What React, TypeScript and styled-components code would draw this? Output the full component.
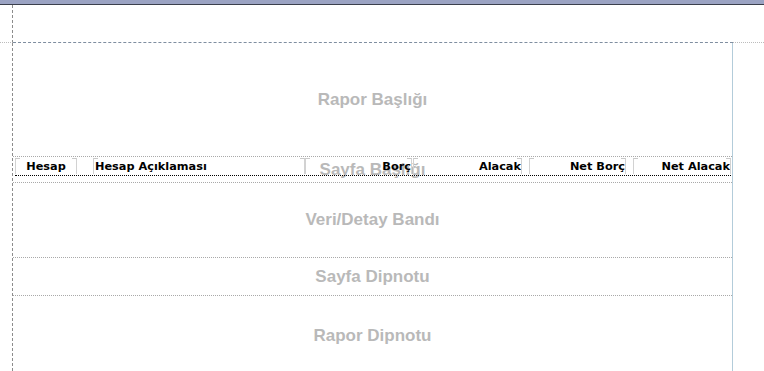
import React from 'react'
import styled, { createGlobalStyle } from 'styled-components'

const GlobalStyle = createGlobalStyle`
  html, body {
    margin: 0;
    padding: 0;
    background: #fff;
  }
  body {
    font-family: "DejaVu Sans", Verdana, sans-serif;
  }
`

const Screen = styled.div`
  width: 764px;
  height: 371px;
  overflow: hidden;
  display: flex;
  flex-direction: column;
  background: #fff;
`

const TitleBar = styled.div`
  flex: none;
  height: 4px;
  background: #9ba3c3;
  border-bottom: 1px solid #3b3f4c;
`

const Row = styled.div<{ $h?: number }>`
  display: flex;
  flex: ${p => (p.$h ? 'none' : '1')};
  height: ${p => (p.$h ? `${p.$h}px` : 'auto')};
`

const Gutter = styled.div<{ $edge?: boolean }>`
  box-sizing: border-box;
  width: 13px;
  flex: none;
  border-right: 1px dashed #8c8c8c;
  border-bottom: ${p => (p.$edge ? '1px dotted #bcbcbc' : 'none')};
`

const MarginArea = styled.div`
  box-sizing: border-box;
  width: 720px;
  flex: none;
  border-bottom: 1px dashed #7f8ea0;
`

const Rest = styled.div<{ $edge?: boolean }>`
  flex: 1;
  border-bottom: ${p => (p.$edge ? '1px dotted #bcbcbc' : 'none')};
`

const Page = styled.div`
  box-sizing: border-box;
  width: 720px;
  flex: none;
  display: flex;
  flex-direction: column;
  border-right: 1px solid #b3ccda;
`

const Band = styled.div<{ $h: number; $last?: boolean }>`
  box-sizing: border-box;
  flex: none;
  height: ${p => p.$h}px;
  display: grid;
  place-items: center;
  border-bottom: ${p => (p.$last ? 'none' : '1px dotted #a9a9a9')};
`

const BandLabel = styled.span`
  grid-area: 1 / 1;
  font-family: "Liberation Sans", Arial, sans-serif;
  font-weight: bold;
  font-size: 17px;
  color: #b9b9b9;
`

const FieldRow = styled.div`
  grid-area: 1 / 1;
  align-self: start;
  justify-self: start;
  box-sizing: border-box;
  display: flex;
  width: 716px;
  height: 18px;
  margin: 1px 0 0 2px;
  border-bottom: 1px dotted #000;
`

const Field = styled.div<{ $w: number; $ml?: number; $align: 'left' | 'center' | 'right' }>`
  position: relative;
  box-sizing: border-box;
  flex: none;
  width: ${p => p.$w}px;
  margin-left: ${p => p.$ml ?? 0}px;
  display: flex;
  align-items: center;
  justify-content: ${p =>
    p.$align === 'left' ? 'flex-start' : p.$align === 'right' ? 'flex-end' : 'center'};
  padding: 0 ${p => (p.$align === 'center' ? 0 : 1)}px 0 ${p => (p.$align === 'center' ? 0 : 2)}px;
  font-size: 11.3px;
  font-weight: bold;
  color: #000;
  white-space: nowrap;

  &::before,
  &::after {
    content: '';
    position: absolute;
    top: 0;
    width: 4px;
    height: 15px;
    border-top: 1px solid #c9c9c9;
  }
  &::before {
    left: 0;
    border-left: 1px solid #d2d2d2;
  }
  &::after {
    right: 0;
    border-right: 1px solid #d2d2d2;
  }
`

const fields = [
  { label: 'Hesap', w: 62, ml: 0, align: 'center' as const },
  { label: 'Hesap Açıklaması', w: 212, ml: 16, align: 'left' as const },
  { label: 'Borç', w: 107, ml: 0, align: 'right' as const },
  { label: 'Alacak', w: 109, ml: 1, align: 'right' as const },
  { label: 'Net Borç', w: 97, ml: 7, align: 'right' as const },
  { label: 'Net Alacak', w: 98, ml: 7, align: 'right' as const },
]

export default function App() {
  return (
    <>
      <GlobalStyle />
      <Screen>
        <TitleBar />
        <Row $h={38}>
          <Gutter $edge />
          <MarginArea />
          <Rest $edge />
        </Row>
        <Row>
          <Gutter />
          <Page>
            <Band $h={114}>
              <BandLabel>Rapor Başlığı</BandLabel>
            </Band>
            <Band $h={26}>
              <BandLabel>Sayfa Başlığı</BandLabel>
              <FieldRow>
                {fields.map(f => (
                  <Field key={f.label} $w={f.w} $ml={f.ml} $align={f.align}>
                    {f.label}
                  </Field>
                ))}
              </FieldRow>
            </Band>
            <Band $h={75}>
              <BandLabel>Veri/Detay Bandı</BandLabel>
            </Band>
            <Band $h={38}>
              <BandLabel>Sayfa Dipnotu</BandLabel>
            </Band>
            <Band $h={80} $last>
              <BandLabel>Rapor Dipnotu</BandLabel>
            </Band>
          </Page>
          <Rest />
        </Row>
      </Screen>
    </>
  )
}
